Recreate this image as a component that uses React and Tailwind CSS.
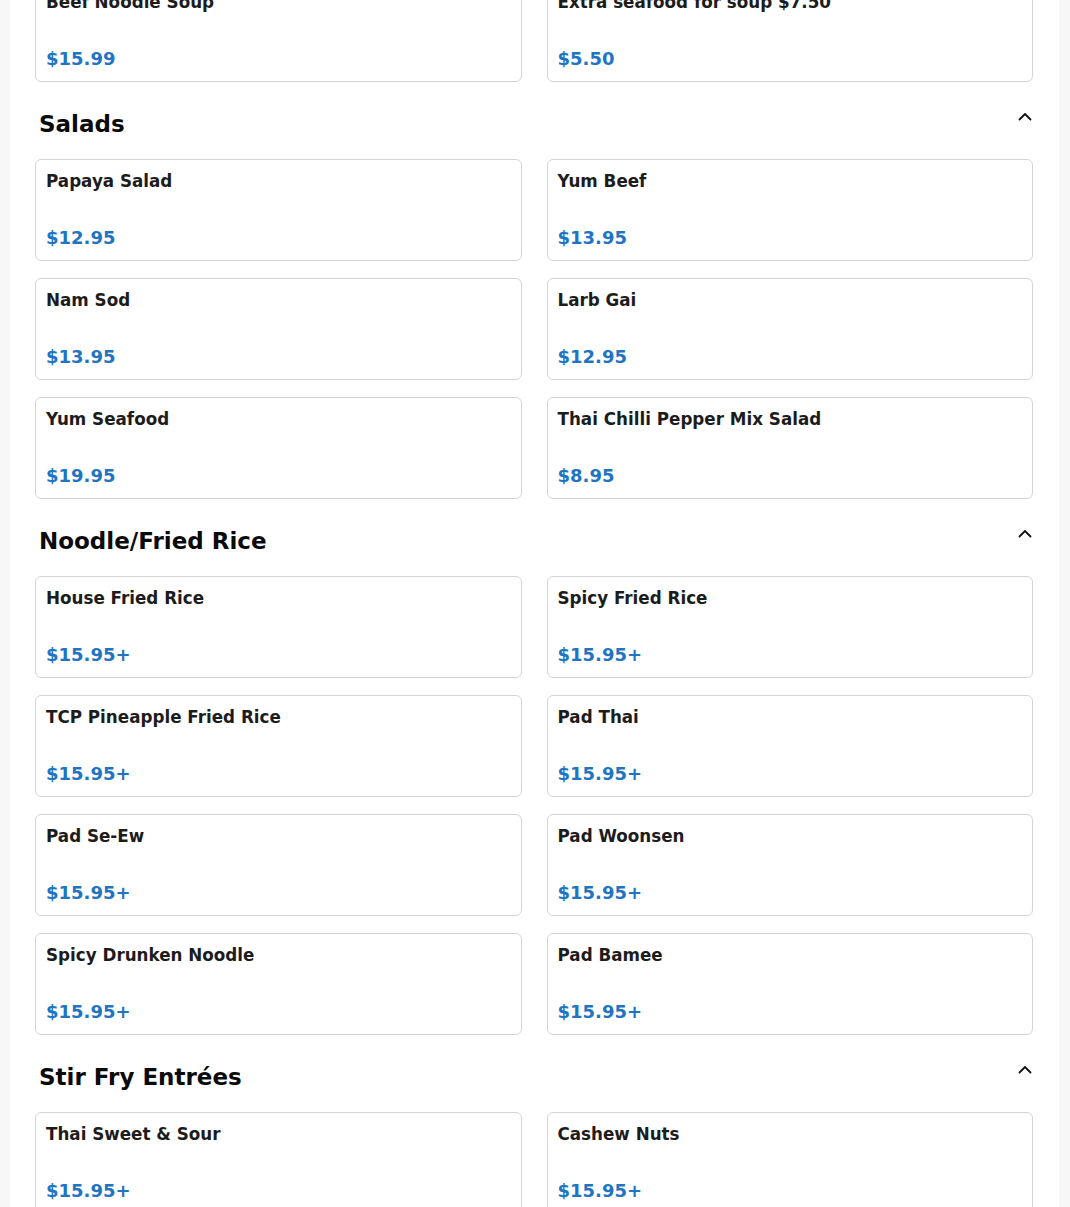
import React from "react";

const sections = [
  {
    title: null,
    items: [
      ["Beef Noodle Soup", "$15.99"],
      ["Extra seafood for soup $7.50", "$5.50"],
    ],
  },
  {
    title: "Salads",
    items: [
      ["Papaya Salad", "$12.95"],
      ["Yum Beef", "$13.95"],
      ["Nam Sod", "$13.95"],
      ["Larb Gai", "$12.95"],
      ["Yum Seafood", "$19.95"],
      ["Thai Chilli Pepper Mix Salad", "$8.95"],
    ],
  },
  {
    title: "Noodle/Fried Rice",
    items: [
      ["House Fried Rice", "$15.95+"],
      ["Spicy Fried Rice", "$15.95+"],
      ["TCP Pineapple Fried Rice", "$15.95+"],
      ["Pad Thai", "$15.95+"],
      ["Pad Se-Ew", "$15.95+"],
      ["Pad Woonsen", "$15.95+"],
      ["Spicy Drunken Noodle", "$15.95+"],
      ["Pad Bamee", "$15.95+"],
    ],
  },
  {
    title: "Stir Fry Entrées",
    items: [
      ["Thai Sweet & Sour", "$15.95+"],
      ["Cashew Nuts", "$15.95+"],
      ["Garlic Pepper", "$15.95+"],
      ["Pad Ka Pow", "$15.95+"],
    ],
  },
];

function Chevron() {
  return (
    <svg width="14" height="9" viewBox="0 0 14 9" className="mt-[2px] mr-[1px] shrink-0">
      <polyline points="1.5,7.5 7,2 12.5,7.5" fill="none" stroke="#111" strokeWidth="1.8" strokeLinecap="round" strokeLinejoin="round" />
    </svg>
  );
}

function Card({ name, price }) {
  return (
    <div className="h-[102px] border border-[#d4d4d4] rounded-[6px] bg-white px-[10px] pt-[10px] pb-[12px] flex flex-col">
      <div className="text-[16.75px] leading-[22px] font-bold text-[#1c1c1c]">{name}</div>
      <div className="mt-[35px] text-[18px] leading-[22px] font-bold text-[#2174c2]">{price}</div>
    </div>
  );
}

export default function App() {
  return (
    <div className="min-h-screen bg-[#f7f7f7] px-[10px] flex" style={{ fontFamily: '"DejaVu Sans", sans-serif' }}>
      <div className="flex-1 bg-white pl-[25px] pr-[26px] flex flex-col mr-[1px]">
        <div className="-mt-[20px] flex flex-col">
          {sections.map((s, i) => (
            <div key={i} className="flex flex-col">
              {s.title && (
                <div className="mt-[28px] mb-[21px] flex items-start justify-between">
                  <h2 className="pl-[4px] text-[23px] leading-[28px] font-bold text-[#0a0a0a]">{s.title}</h2>
                  <Chevron />
                </div>
              )}
              <div className="grid grid-cols-2 gap-x-[25px] gap-y-[17px]">
                {s.items.map(([n, p], j) => (
                  <Card key={j} name={n} price={p} />
                ))}
              </div>
            </div>
          ))}
        </div>
      </div>
    </div>
  );
}
